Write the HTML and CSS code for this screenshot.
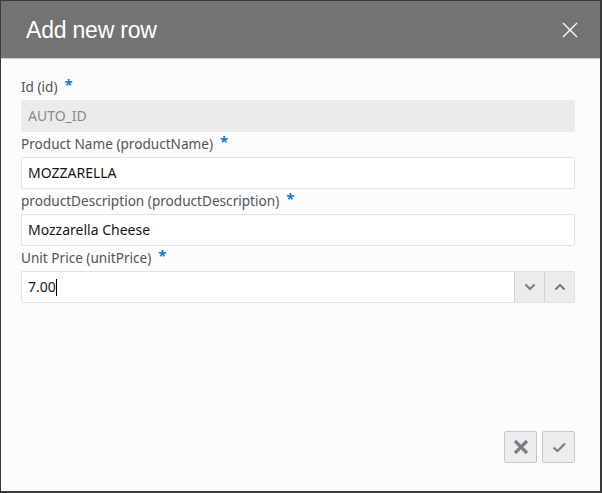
FILE: index.html
```html
<!DOCTYPE html>
<html>
<head>
<meta charset="utf-8">
<link rel="stylesheet" href="styles.css">
</head>
<body>
<div class="dialog">
  <div class="header">
    <div class="title">Add new row</div>
    <svg class="close" width="16" height="16" viewBox="0 0 16 16"><path d="M1 1 L15 15 M15 1 L1 15" stroke="#fff" stroke-width="1.3" fill="none"/></svg>
  </div>
  <div class="body">
    <div class="field">
      <div class="label">Id (id)<span class="req">*</span></div>
      <div class="input disabled">AUTO_ID</div>
    </div>
    <div class="field">
      <div class="label">Product Name (productName)<span class="req">*</span></div>
      <div class="input">MOZZARELLA</div>
    </div>
    <div class="field">
      <div class="label">productDescription (productDescription)<span class="req">*</span></div>
      <div class="input">Mozzarella Cheese</div>
    </div>
    <div class="field">
      <div class="label">Unit Price (unitPrice)<span class="req">*</span></div>
      <div class="input number">
        <div class="value">7.00<span class="caret"></span></div>
        <div class="spin"><svg width="12" height="8" viewBox="0 0 12 8"><path d="M1.5 1.5 L6 6 L10.5 1.5" stroke="#7a7a7a" stroke-width="2" fill="none"/></svg></div>
        <div class="spin"><svg width="12" height="8" viewBox="0 0 12 8"><path d="M1.5 6.5 L6 2 L10.5 6.5" stroke="#7a7a7a" stroke-width="2" fill="none"/></svg></div>
      </div>
    </div>
  </div>
  <div class="footer">
    <div class="btn"><svg width="16" height="16" viewBox="0 0 16 16"><path d="M2 2 L14 14 M14 2 L2 14" stroke="#7b7f84" stroke-width="3.2" fill="none"/></svg></div>
    <div class="btn"><svg width="16" height="16" viewBox="0 0 16 16"><path d="M2.5 8.5 L6.5 12 L14 4.5" stroke="#7b7f84" stroke-width="2.2" fill="none"/></svg></div>
  </div>
</div>
</body>
</html>
```
FILE: styles.css
```css
html, body { margin: 0; padding: 0; }
body { width: 602px; height: 493px; overflow: hidden; background: #3a3a3a; }
.dialog {
  box-sizing: border-box;
  width: 602px; height: 493px;
  border-left: 1px solid #3a3a3a;
  border-top: 1px solid #3a3a3a;
  border-right: 2px solid #3a3a3a;
  border-bottom: 2px solid #3a3a3a;
  background: #fcfcfc;
  display: flex; flex-direction: column;
  font-family: "Noto Sans", "Liberation Sans", sans-serif;
}
.header {
  height: 57px;
  background: #737373;
  border-bottom: 1px solid #c9c9c9;
  display: flex; align-items: center; justify-content: space-between;
  padding: 0 22px 0 25px;
}
.title { color: #fff; font-size: 23px; font-family: "Liberation Sans", sans-serif; letter-spacing: -0.2px; margin-top: 1px; }
.close { display: block; margin-top: 1px; }
.body { padding: 16px 25px 0 20px; flex: 1; }
.field { display: flex; flex-direction: column; }
.label {
  height: 25px; line-height: 22px;
  font-size: 13.6px; color: #555;
}
.req { color: #1a7bc4; font-size: 15px; margin-left: 7px; font-weight: 700; position: relative; top: -2px; }
.input {
  box-sizing: border-box; height: 32px;
  border: 1px solid #e1e1e1; border-radius: 2px;
  background: #fff;
  font-size: 14px; color: #161616;
  padding: 0 6px; line-height: 30px;
}
.input.disabled { background: #ebebeb; border-color: #ebebeb; color: #8a8a8a; }
.input.number { display: flex; padding: 0 0 0 6px; }
.value { flex: 1; }
.caret { display: inline-block; width: 1px; height: 17px; background: #000; vertical-align: middle; margin-top: -2px; }
.spin {
  width: 29px; border-left: 1px solid #d3d3d3; background: #ececec;
  display: flex; align-items: center; justify-content: center;
}
.footer { display: flex; justify-content: flex-end; gap: 5px; padding: 0 25px 28px 0; }
.btn {
  box-sizing: border-box; width: 33px; height: 32px;
  background: #ededed; border: 1px solid #c8c8c8; border-radius: 2px;
  display: flex; align-items: center; justify-content: center;
}
```
